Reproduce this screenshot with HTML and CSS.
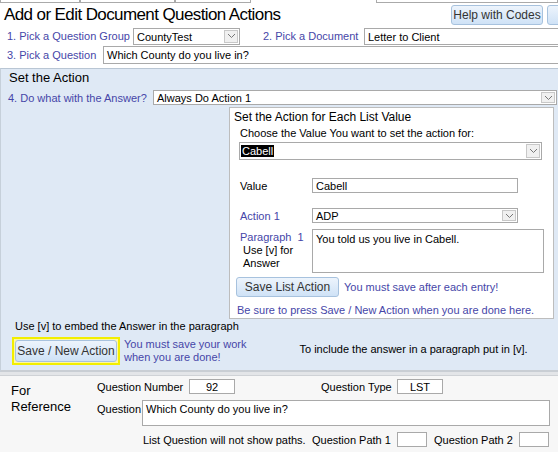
FILE: index.html
```html
<!DOCTYPE html>
<html lang="en">
<head>
  <meta charset="UTF-8" />
  <title>Add or Edit Document Question Actions</title>
  <link rel="stylesheet" href="styles.css">
</head>
<body>
  <div class="cutoff">
    <span class="cut cut-a"></span>
    <span class="cut cut-b"></span>
    <span class="cut cut-c"></span>
    <span class="cut cut-d"></span>
  </div>

  <header class="page-head">
    <h1>Add or Edit Document Question Actions</h1>
    <div class="head-buttons">
      <button class="btn btn-help">Help with Codes</button>
      <button class="btn btn-cut" aria-label="Close"></button>
    </div>
  </header>

  <div class="pick-row row-first">
    <span class="lbl lbl-group">1. Pick a Question Group</span>
    <div class="field combo w-group">CountyTest<span class="arrow"><svg width="9" height="6" viewBox="0 0 9 6"><path d="M1 1l3.5 3.5L8 1" fill="none" stroke="#777" stroke-width="1"/></svg></span></div>
    <span class="lbl lbl-doc">2. Pick a Document</span>
    <div class="field w-doc">Letter to Client</div>
  </div>

  <div class="pick-row">
    <span class="lbl lbl-question">3. Pick a Question</span>
    <div class="field w-question">Which County do you live in?</div>
  </div>

  <section class="action-panel">
    <h2>Set the Action</h2>
    <div class="do-row">
      <span class="lbl lbl-do">4. Do what with the Answer?</span>
      <div class="field combo w-do">Always Do Action 1<span class="arrow"><svg width="9" height="6" viewBox="0 0 9 6"><path d="M1 1l3.5 3.5L8 1" fill="none" stroke="#777" stroke-width="1"/></svg></span></div>
    </div>

    <div class="list-box">
      <h3>Set the Action for Each List Value</h3>
      <p class="choose">Choose the Value You want to set the action for:</p>
      <div class="field combo w-value-pick"><span class="picked">Cabell</span><span class="arrow"><svg width="9" height="6" viewBox="0 0 9 6"><path d="M1 1l3.5 3.5L8 1" fill="none" stroke="#777" stroke-width="1"/></svg></span></div>

      <div class="form-row row-value">
        <span class="row-lbl">Value</span>
        <div class="field w-short">Cabell</div>
      </div>
      <div class="form-row row-action">
        <span class="row-lbl blue">Action 1</span>
        <div class="field combo w-short">ADP<span class="arrow"><svg width="9" height="6" viewBox="0 0 9 6"><path d="M1 1l3.5 3.5L8 1" fill="none" stroke="#777" stroke-width="1"/></svg></span></div>
      </div>
      <div class="form-row row-para">
        <div class="row-lbl para-lbl">
          <span class="blue">Paragraph&nbsp; 1</span>
          <span class="hint">Use [v] for<br>Answer</span>
        </div>
        <div class="field area w-para">You told us you live in Cabell.</div>
      </div>

      <div class="save-row">
        <button class="btn btn-list">Save List Action</button>
        <span class="blue">You must save after each entry!</span>
      </div>
      <p class="blue be-sure">Be sure to press Save / New Action when you are done here.</p>
    </div>

    <p class="embed">Use [v] to embed the Answer in the paragraph</p>
    <div class="new-row">
      <div class="focus-ring"><button class="btn btn-new">Save / New Action</button></div>
      <span class="blue must">You must save your work<br>when you are done!</span>
      <span class="include">To include the answer in a paragraph put in [v].</span>
    </div>
  </section>

  <div class="splitter"></div>

  <section class="reference">
    <div class="ref-title">For<br>Reference</div>
    <div class="ref-body">
      <div class="ref-row">
        <span class="ref-lbl w-qnum">Question Number</span>
        <div class="field small center">92</div>
        <span class="ref-lbl w-qtype">Question Type</span>
        <div class="field small center">LST</div>
      </div>
      <div class="ref-row row-q">
        <span class="ref-lbl w-q">Question</span>
        <div class="field area w-qtext">Which County do you live in?</div>
      </div>
      <div class="ref-row row-paths">
        <span class="ref-lbl w-note">List Question will not show paths.</span>
        <span class="ref-lbl w-path">Question Path 1</span>
        <div class="field tiny"></div>
        <span class="ref-lbl w-path path-2">Question Path 2</span>
        <div class="field tiny"></div>
      </div>
    </div>
  </section>
</body>
</html>
```

FILE: styles.css
```css
:root {
  --blue-text: #4646a8;
  --panel-bg: #dfe9f5;
  --field-border: #a9a9a9;
  --font: "Liberation Sans", Arial, sans-serif;
}

* {
  margin: 0;
  padding: 0;
  box-sizing: border-box;
}

body {
  width: 558px;
  height: 452px;
  overflow: hidden;
  font-family: var(--font);
  font-size: 11px;
  color: #000;
  background: #fff;
}

.blue {
  color: var(--blue-text);
}

/* strip of inputs scrolled off above */
.cutoff {
  display: flex;
  height: 3px;
}

.cut {
  height: 3px;
  border: 1px solid #aaa;
  border-top: none;
}

.cut-a { width: 80px; }
.cut-b { width: 95px; }
.cut-c { width: 76px; }
.cut-d { width: 182px; margin-left: 125px; }

.page-head {
  display: flex;
  justify-content: space-between;
  align-items: flex-start;
  padding-left: 4px;
  margin-top: 1px;
}

h1 {
  font-size: 17px;
  letter-spacing: -0.6px;
  font-weight: normal;
  line-height: 21px;
}

.head-buttons {
  display: flex;
  gap: 4px;
  margin-top: 1px;
  margin-right: -4px;
}

.btn {
  font-family: var(--font);
  font-size: 12px;
  color: #333;
  background: linear-gradient(#edf4fc, #cfe2f6);
  border: 1px solid #a7c2de;
  border-radius: 3px;
  cursor: pointer;
}

.btn-help {
  width: 92px;
  height: 20px;
}

.btn-cut {
  width: 15px;
  height: 20px;
}

.pick-row {
  display: flex;
  align-items: center;
  padding-left: 7px;
  height: 18px;
  margin-top: 1px;
}

.row-first {
  margin-top: 2px;
}

.lbl {
  color: var(--blue-text);
  font-size: 11px;
}

.field {
  position: relative;
  height: 17px;
  border: 1px solid var(--field-border);
  background: #fff;
  padding: 1px 3px;
  font-size: 11px;
  line-height: 14px;
  white-space: nowrap;
}

.combo .arrow {
  position: absolute;
  right: 1px;
  top: 1px;
  bottom: 1px;
  width: 14px;
  border: 1px solid #c8c8c8;
  background: #f0f0f0;
  display: flex;
  align-items: center;
  justify-content: center;
}

.lbl-group { width: 126px; }
.w-group { width: 107px; }
.lbl-doc { width: 101px; margin-left: 23px; }
.w-doc { flex: 1; margin-right: -2px; border-right: none; }

.lbl-question { width: 96px; }
.w-question { flex: 1; height: 18px; border-right: none; }

.action-panel {
  margin-top: 4px;
  background: var(--panel-bg);
  border-top: 1px solid #b9c6d4;
  border-left: 1px solid #c6d0da;
  border-bottom: 2px solid #c9ced4;
  height: 304px;
}

h2 {
  font-size: 13px;
  font-weight: normal;
  line-height: 16px;
  padding: 1px 0 0 8px;
}

.do-row {
  display: flex;
  align-items: center;
  padding-left: 7px;
  margin-top: 4px;
}

.lbl-do { width: 145px; }

.w-do {
  width: 404px;
  height: 15px;
  line-height: 12px;
}

.list-box {
  margin: 2px 4px 0 228px;
  background: #fff;
  border: 1px solid #bdbdbd;
  height: 212px;
  padding: 2px 0 0 4px;
}

h3 {
  font-size: 12px;
  font-weight: normal;
  line-height: 15px;
}

.choose {
  font-size: 11px;
  line-height: 14px;
  padding-left: 6px;
  margin-top: 1px;
}

.w-value-pick {
  width: 303px;
  height: 18px;
  margin: 2px 0 0 5px;
  padding-left: 1px;
}

.picked {
  background: #000;
  color: #fff;
  padding: 0 1px;
}

.form-row {
  display: flex;
  padding-left: 6px;
}

.row-lbl {
  width: 72px;
  font-size: 11px;
}

.row-value {
  align-items: center;
  margin-top: 18px;
}

.row-action {
  align-items: center;
  margin-top: 15px;
}

.row-para {
  margin-top: 6px;
}

.w-short {
  width: 206px;
  height: 15px;
  line-height: 12px;
}

.para-lbl {
  display: flex;
  flex-direction: column;
  padding-top: 2px;
  line-height: 13px;
}

.hint {
  padding-left: 3px;
}

.w-para {
  width: 232px;
  height: 44px;
  white-space: normal;
  padding-top: 2px;
}

.save-row {
  display: flex;
  align-items: center;
  gap: 5px;
  margin-top: 4px;
  padding-left: 2px;
}

.btn-list {
  width: 103px;
  height: 20px;
}

.be-sure {
  margin-top: 6px;
  padding-left: 3px;
  line-height: 14px;
}

.embed {
  padding-left: 14px;
  margin-top: 0;
  line-height: 14px;
}

.new-row {
  display: flex;
  align-items: flex-start;
  padding-left: 11px;
  margin-top: 4px;
}

.focus-ring {
  border: 2px solid #f2ee00;
  padding: 1px;
  background: #fff8a0;
}

.btn-new {
  display: block;
  width: 102px;
  height: 22px;
}

.must {
  margin-left: 4px;
  line-height: 13px;
  margin-top: 1px;
}

.include {
  margin-left: 53px;
  margin-top: 6px;
}

.splitter {
  height: 4px;
  background: #e3e5e8;
  border-bottom: 1px solid #cfd2d6;
}

.reference {
  display: flex;
  background: #f7f7f7;
  height: 77px;
}

.ref-title {
  width: 97px;
  padding: 7px 0 0 11px;
  font-size: 13px;
  line-height: 16px;
}

.ref-body {
  padding-top: 3px;
}

.ref-row {
  display: flex;
  align-items: center;
}

.ref-lbl {
  font-size: 11px;
}

.field.small {
  width: 46px;
  height: 15px;
  line-height: 12px;
}

.field.tiny {
  width: 30px;
  height: 15px;
}

.center {
  text-align: center;
}

.w-qnum { width: 92px; }
.w-qtype { width: 76px; margin-left: 86px; }
.w-q { width: 45px; align-self: flex-start; padding-top: 3px; }

.row-q {
  margin-top: 6px;
}

.w-qtext {
  width: 408px;
  height: 26px;
}

.row-paths {
  margin-top: 6px;
  padding-left: 46px;
}

.w-note { width: 169px; }
.w-path { width: 85px; }
.path-2 { margin-left: 7px; }
```
